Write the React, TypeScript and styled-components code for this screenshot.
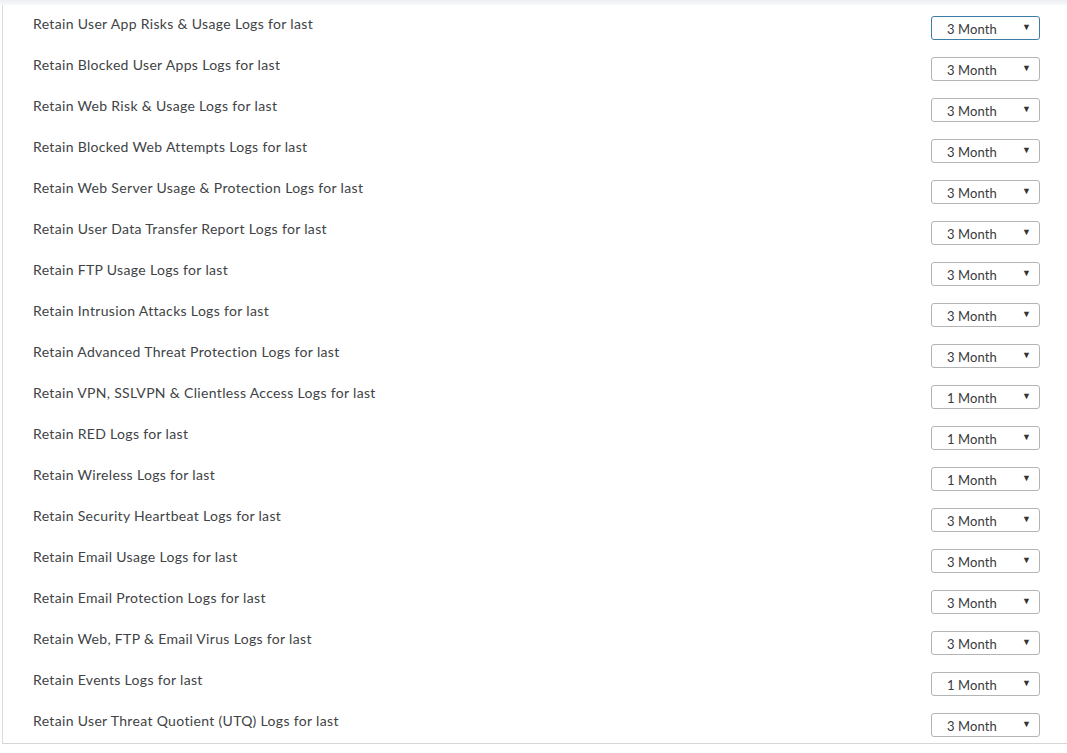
import React from "react";
import styled, { createGlobalStyle } from "styled-components";

const GlobalStyle = createGlobalStyle`
  html, body { margin: 0; padding: 0; background: #ffffff; }
  body { font-family: Lato, "Liberation Sans", Arial, sans-serif; }
`;

const Page = styled.div`
  width: 1067px;
  height: 753px;
  background: #ffffff;
  display: flex;
  flex-direction: column;
`;

const TopShade = styled.div`
  height: 5px;
  background: linear-gradient(#eceef2, #f8f9fa);
`;

const Panel = styled.div`
  margin-left: 2px;
  border-left: 1px solid #dadada;
  border-bottom: 1px solid #d6d6d6;
  padding: 6px 27px 6px 30px;
  display: flex;
  flex-direction: column;
  gap: 12px;
`;

const Row = styled.div`
  height: 29px;
  display: flex;
  justify-content: space-between;
  align-items: flex-start;
`;

const Label = styled.span`
  font-size: 14px;
  line-height: 18px;
  letter-spacing: 0.33px;
  color: #404346;
  margin-top: 4px;
`;

const SelectBox = styled.div<{ $focused?: boolean }>`
  box-sizing: border-box;
  width: 109px;
  height: 24px;
  margin-top: 5px;
  border: 1px solid ${(p) => (p.$focused ? "#3a7ea8" : "#b4b4b4")};
  border-radius: 3px;
  background: #ffffff;
  display: flex;
  align-items: center;
  justify-content: space-between;
  padding: 0 8px 0 15px;
`;

const SelectText = styled.span`
  font-size: 13px;
  letter-spacing: 0.1px;
  color: #3a3a3a;
  padding-top: 2px;
`;

const Arrow = styled.span`
  font-size: 9px;
  color: #333;
  margin-top: -3px;
`;

const rows: [string, string][] = [
  ["Retain User App Risks & Usage Logs for last", "3 Month"],
  ["Retain Blocked User Apps Logs for last", "3 Month"],
  ["Retain Web Risk & Usage Logs for last", "3 Month"],
  ["Retain Blocked Web Attempts Logs for last", "3 Month"],
  ["Retain Web Server Usage & Protection Logs for last", "3 Month"],
  ["Retain User Data Transfer Report Logs for last", "3 Month"],
  ["Retain FTP Usage Logs for last", "3 Month"],
  ["Retain Intrusion Attacks Logs for last", "3 Month"],
  ["Retain Advanced Threat Protection Logs for last", "3 Month"],
  ["Retain VPN, SSLVPN & Clientless Access Logs for last", "1 Month"],
  ["Retain RED Logs for last", "1 Month"],
  ["Retain Wireless Logs for last", "1 Month"],
  ["Retain Security Heartbeat Logs for last", "3 Month"],
  ["Retain Email Usage Logs for last", "3 Month"],
  ["Retain Email Protection Logs for last", "3 Month"],
  ["Retain Web, FTP & Email Virus Logs for last", "3 Month"],
  ["Retain Events Logs for last", "1 Month"],
  ["Retain User Threat Quotient (UTQ) Logs for last", "3 Month"],
];

export default function App() {
  return (
    <>
      <GlobalStyle />
      <Page>
        <TopShade />
        <Panel>
          {rows.map(([label, value], i) => (
            <Row key={label}>
              <Label>{label}</Label>
              <SelectBox $focused={i === 0}>
                <SelectText>{value}</SelectText>
                <Arrow>▼</Arrow>
              </SelectBox>
            </Row>
          ))}
        </Panel>
      </Page>
    </>
  );
}
